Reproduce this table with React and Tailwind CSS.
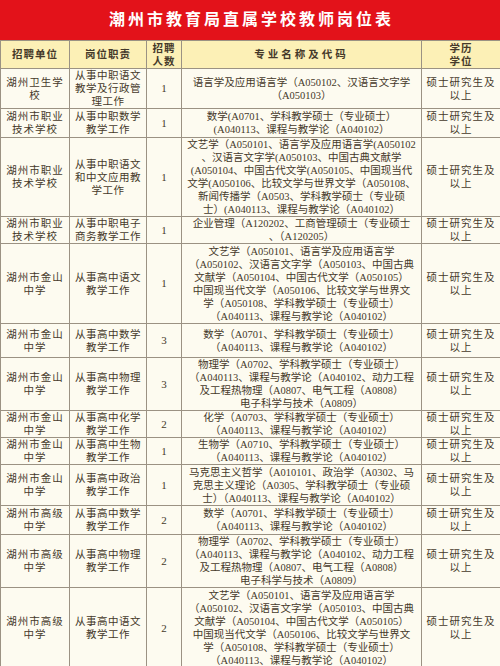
const EDU = ["硕士研究生及", "以上"];

const rows = [
    {
        h: "h-[40px]",
        unit: ["湖州卫生学", "校"],
        duty: ["从事中职语文", "教学及行政管", "理工作"],
        n: "1",
        major: ["语言学及应用语言学（A050102、汉语言文字学", "（A050103）"],
    },
    {
        h: "h-[29px]",
        unit: ["湖州市职业", "技术学校"],
        duty: ["从事中职数学", "教学工作"],
        n: "1",
        major: ["数学(A0701、学科教学硕士（专业硕士）", "(A040113、课程与教学论（A040102）"],
    },
    {
        h: "h-[79px]",
        unit: ["湖州市职业", "技术学校"],
        duty: ["从事中职语文", "和中文应用教", "学工作"],
        n: "1",
        major: [
            "文艺学（A050101、语言学及应用语言学(A050102",
            "、汉语言文字学(A050103、中国古典文献学",
            "(A050104、中国古代文学(A050105、中国现当代",
            "文学(A050106、比较文学与世界文学（A050108、",
            "新闻传播学（A0503、学科教学硕士（专业硕",
            "士）(A040113、课程与教学论（A040102）",
        ],
    },
    {
        h: "h-[27px]",
        unit: ["湖州市职业", "技术学校"],
        duty: ["从事中职电子", "商务教学工作"],
        n: "1",
        major: ["企业管理（A120202、工商管理硕士（专业硕士", "、（A120205）"],
    },
    {
        h: "h-[80px]",
        unit: ["湖州市金山", "中学"],
        duty: ["从事高中语文", "教学工作"],
        n: "1",
        major: [
            "文艺学（A050101、语言学及应用语言学",
            "（A050102、汉语言文字学（A050103、中国古典",
            "文献学（A050104、中国古代文学（A050105）",
            "中国现当代文学（A050106、比较文学与世界文",
            "学（A050108、学科教学硕士（专业硕士）",
            "（A040113、课程与教学论（A040102）",
        ],
    },
    {
        h: "h-[34px]",
        unit: ["湖州市金山", "中学"],
        duty: ["从事高中数学", "教学工作"],
        n: "3",
        major: ["数学（A0701、学科教学硕士（专业硕士）", "（A040113、课程与教学论（A040102）"],
    },
    {
        h: "h-[51px]",
        unit: ["湖州市金山", "中学"],
        duty: ["从事高中物理", "教学工作"],
        n: "3",
        major: [
            "物理学（A0702、学科教学硕士（专业硕士）",
            "（A040113、课程与教学论（A040102、动力工程",
            "及工程热物理（A0807、电气工程（A0808）",
            "电子科学与技术（A0809）",
        ],
    },
    {
        h: "h-[27px]",
        unit: ["湖州市金山", "中学"],
        duty: ["从事高中化学", "教学工作"],
        n: "2",
        major: ["化学（A0703、学科教学硕士（专业硕士）", "（A040113、课程与教学论（A040102）"],
    },
    {
        h: "h-[27px]",
        unit: ["湖州市金山", "中学"],
        duty: ["从事高中生物", "教学工作"],
        n: "1",
        major: ["生物学（A0710、学科教学硕士（专业硕士）", "（A040113、课程与教学论（A040102）"],
    },
    {
        h: "h-[41px]",
        unit: ["湖州市金山", "中学"],
        duty: ["从事高中政治", "教学工作"],
        n: "1",
        major: [
            "马克思主义哲学（A010101、政治学（A0302、马",
            "克思主义理论（A0305、学科教学硕士（专业硕",
            "士）（A040113、课程与教学论（A040102）",
        ],
    },
    {
        h: "h-[29px]",
        unit: ["湖州市高级", "中学"],
        duty: ["从事高中数学", "教学工作"],
        n: "2",
        major: ["数学（A0701、学科教学硕士（专业硕士）", "（A040113、课程与教学论（A040102）"],
    },
    {
        h: "h-[53px]",
        unit: ["湖州市高级", "中学"],
        duty: ["从事高中物理", "教学工作"],
        n: "2",
        major: [
            "物理学（A0702、学科教学硕士（专业硕士）",
            "（A040113、课程与教学论（A040102、动力工程",
            "及工程热物理（A0807、电气工程（A0808）",
            "电子科学与技术（A0809）",
        ],
    },
    {
        h: "h-[81px]",
        unit: ["湖州市高级", "中学"],
        duty: ["从事高中语文", "教学工作"],
        n: "2",
        major: [
            "文艺学（A050101、语言学及应用语言学",
            "（A050102、汉语言文字学（A050103、中国古典",
            "文献学（A050104、中国古代文学（A050105）",
            "中国现当代文学（A050106、比较文学与世界文",
            "学（A050108、学科教学硕士（专业硕士）",
            "（A040113、课程与教学论（A040102）",
        ],
    },
];

const Lines = ({ lines }) => (
    <>
        {lines.map((l, i) => (
            <div key={i} className="whitespace-nowrap">
                {l}
            </div>
        ))}
    </>
);

const App = () => {
    return (
        <div className="w-[500px] h-[666px] overflow-hidden bg-[#fdfbf0] text-[#45392a] font-['Liberation_Serif','Noto_Sans_CJK_SC',serif]">
            {/* TITLE */}
            <div className="h-[40px] bg-[#e3121a] flex items-center justify-center">
                <h1 className="text-white text-[16px] font-semibold tracking-[3px] pl-[3px]">潮州市教育局直属学校教师岗位表</h1>
            </div>

            {/* TABLE */}
            <table className="w-[500px] table-fixed border-collapse text-center text-[10.5px] leading-[13px]">
                <colgroup>
                    <col className="w-[69px]" />
                    <col className="w-[77px]" />
                    <col className="w-[35px]" />
                    <col className="w-[240px]" />
                    <col className="w-[79px]" />
                </colgroup>
                <thead>
                    <tr className="h-[28px] bg-[#fcf0b6] font-semibold">
                        <th className="border border-[#9b9283] tracking-[1px]">招聘单位</th>
                        <th className="border border-[#9b9283] tracking-[1px]">岗位职责</th>
                        <th className="border border-[#9b9283] tracking-[1px]">
                            招聘
                            <br />
                            人数
                        </th>
                        <th className="border border-[#9b9283] tracking-[3px]">专业名称及代码</th>
                        <th className="border border-[#9b9283] tracking-[1px]">
                            学历
                            <br />
                            学位
                        </th>
                    </tr>
                </thead>
                <tbody>
                    {rows.map((r, i) => (
                        <tr key={i} className={r.h}>
                            <td className="border border-[#9b9283] tracking-[1px] p-0">
                                <Lines lines={r.unit} />
                            </td>
                            <td className="border border-[#9b9283] tracking-[0.5px] p-0">
                                <Lines lines={r.duty} />
                            </td>
                            <td className="border border-[#9b9283] text-[11px] p-0">{r.n}</td>
                            <td className="border border-[#9b9283] p-0 overflow-hidden">
                                <Lines lines={r.major} />
                            </td>
                            <td className="border border-[#9b9283] tracking-[1px] p-0">
                                <Lines lines={EDU} />
                            </td>
                        </tr>
                    ))}
                </tbody>
            </table>
        </div>
    );
};

export default App;
